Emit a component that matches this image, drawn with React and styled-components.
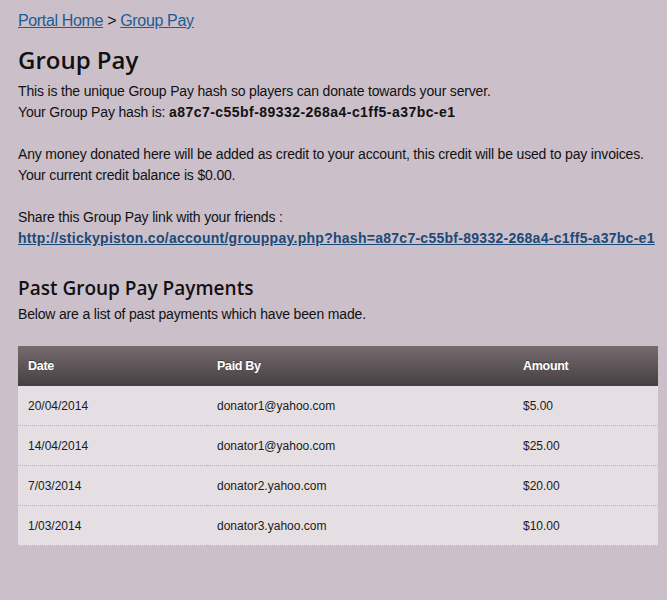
import React from "react";
import styled, { createGlobalStyle } from "styled-components";

const Global = createGlobalStyle`
  html, body { margin: 0; padding: 0; background: #cbc0ca; }
  body { font-family: "Liberation Sans", Arial, sans-serif; color: #111; }
`;

const Page = styled.div`
  padding: 8px 9px 40px 18px;
`;

const Crumbs = styled.div`
  font-size: 16px;
  line-height: 26px;
  letter-spacing: -0.35px;
  color: #111;
`;

const Link = styled.a`
  color: ${(p) => (p.$dark ? "#1b4a78" : "#1d5b94")};
  text-decoration: underline;
  font-weight: ${(p) => (p.$bold ? 700 : 400)};
  letter-spacing: ${(p) => (p.$bold ? "0.27px" : "inherit")};
`;

const Hash = styled.b`
  font-weight: 700;
  letter-spacing: 0.45px;
`;

const Title = styled.h1`
  font-family: "Open Sans", sans-serif;
  font-weight: 600;
  font-size: 24px;
  line-height: 30px;
  margin: 11px 0 0;
  color: #111;
`;

const SubTitle = styled.h2`
  font-family: "Open Sans", sans-serif;
  font-weight: 600;
  font-size: 19px;
  line-height: 26px;
  margin: 26px 0 0;
  color: #111;
`;

const Para = styled.p`
  font-size: 14px;
  line-height: 21px;
  letter-spacing: -0.17px;
  margin: ${(p) => p.$mt || "21px"} 0 0;
`;

const Table = styled.table`
  margin-top: 21px;
  width: 640px;
  border-collapse: separate;
  border-spacing: 0;
  background: #e5dfe4;
  font-size: 12px;
`;

const Th = styled.th`
  height: 40px;
  padding: 0 10px;
  text-align: left;
  font-weight: 700;
  font-size: 12.5px;
  letter-spacing: -0.3px;
  color: #fff;
  text-shadow: 0 -1px 0 rgba(0,0,0,0.35);
  background: linear-gradient(#766b70, #463f41);
  width: ${(p) => p.$w}px;
  box-sizing: border-box;
`;

const Td = styled.td`
  height: 40px;
  padding: 0 10px;
  color: #1a1a1a;
  border-bottom: 1px dotted #b9aeb7;
  box-sizing: border-box;
`;

const rows = [
  ["20/04/2014", "donator1@yahoo.com", "$5.00"],
  ["14/04/2014", "donator1@yahoo.com", "$25.00"],
  ["7/03/2014", "donator2.yahoo.com", "$20.00"],
  ["1/03/2014", "donator3.yahoo.com", "$10.00"],
];

export default function App() {
  return (
    <Page>
      <Global />
      <Crumbs>
        <Link href="#">Portal Home</Link> &gt; <Link href="#">Group Pay</Link>
      </Crumbs>
      <Title>Group Pay</Title>
      <Para $mt="6px">
        This is the unique Group Pay hash so players can donate towards your server.
        <br />
        Your Group Pay hash is: <Hash>a87c7-c55bf-89332-268a4-c1ff5-a37bc-e1</Hash>
      </Para>
      <Para>
        Any money donated here will be added as credit to your account, this credit will be used to pay invoices.
        <br />
        Your current credit balance is $0.00.
      </Para>
      <Para>
        Share this Group Pay link with your friends :
        <br />
        <Link href="#" $bold $dark>
          http://stickypiston.co/account/grouppay.php?hash=a87c7-c55bf-89332-268a4-c1ff5-a37bc-e1
        </Link>
      </Para>
      <SubTitle>Past Group Pay Payments</SubTitle>
      <Para $mt="3px">Below are a list of past payments which have been made.</Para>
      <Table>
        <thead>
          <tr>
            <Th $w={189}>Date</Th>
            <Th $w={306}>Paid By</Th>
            <Th $w={145}>Amount</Th>
          </tr>
        </thead>
        <tbody>
          {rows.map((r) => (
            <tr key={r[0]}>
              {r.map((c, i) => (
                <Td key={i}>{c}</Td>
              ))}
            </tr>
          ))}
        </tbody>
      </Table>
    </Page>
  );
}
